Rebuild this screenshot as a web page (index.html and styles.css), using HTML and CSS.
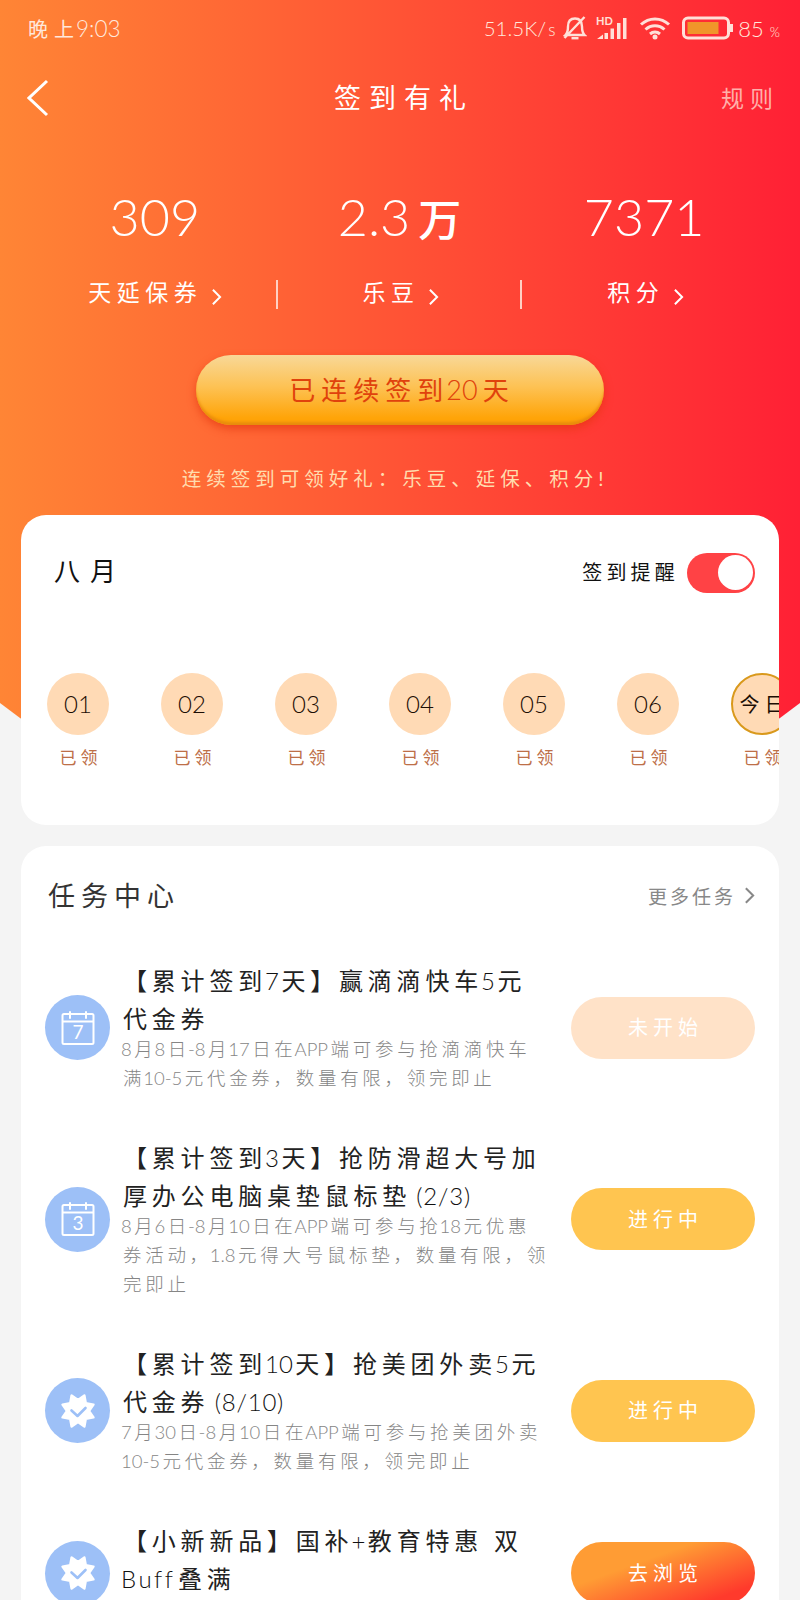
FILE: index.html
```html
<!DOCTYPE html>
<html lang="zh-CN">
<head>
    <meta charset="UTF-8">
    <meta name="viewport" content="width=device-width, initial-scale=1.0">
    <title>签到有礼</title>
    <link rel="stylesheet" href="styles.css">
</head>
<body>
    <svg class="defs" width="0" height="0">
        <symbol id="calendar" viewBox="0 0 34 34">
            <g fill="none" stroke="#fff" stroke-width="2" stroke-linecap="round">
                <rect x="1.5" y="3" width="31" height="30" rx="1.5"/>
                <path d="M2 10.5h30M9 1v6M25 1v6"/>
            </g>
        </symbol>
        <symbol id="badge" viewBox="0 0 36 36">
            <path fill="#fff" stroke="#fff" stroke-width="2.4" stroke-linejoin="round" d="M33.5 24.4 29 18l4.5-6.4-7.7-1.4-1.4-7.7L18 7l-6.4-4.5-1.4 7.7-7.7 1.4L7 18l-4.5 6.4 7.7 1.4 1.4 7.7L18 29l6.4 4.5 1.4-7.7z"/>
            <path fill="none" stroke="#9dc0f7" stroke-width="2.6" stroke-linecap="round" stroke-linejoin="round" d="M11.5 17.5l6 5.5 8-8"/>
        </symbol>
        <symbol id="arrow" viewBox="0 0 12 20">
            <path fill="none" stroke="currentColor" stroke-width="2.2" d="M2 2l8 8-8 8"/>
        </symbol>
    </svg>

    <div class="page">
        <header class="hero">
            <div class="status">
                <div class="time">晚<i></i>上<span class="n">9:03</span></div>
                <div class="status-right">
                    <span class="n speed">51.5K/<small>s</small></span>
                    <svg class="bell" width="24" height="24" viewBox="0 0 24 24" fill="none" stroke="#ffe0d8" stroke-width="2.4">
                        <path d="M2.5 19h19c-2.5-2.5-2.5-5-2.5-8.5C19 5 16 2.5 12 2.5S5 5 5 10.5c0 3.5 0 6-2.5 8.5zM1.5 22L21.5 1"/>
                        <path d="M8.5 22.2h7"/>
                    </svg>
                    <svg class="signal" width="32" height="24" viewBox="0 0 32 24">
                        <text class="hd" x="0" y="9">HD</text>
                        <path fill="#ffe0d8" d="M1 23l6-4.5V23zM8.5 17H12v6H8.5zM14.5 12.5H18V23h-3.5zM21 7h3.5v16H21zM27 2h3.5v21H27z"/>
                    </svg>
                    <svg class="wifi" width="32" height="24" viewBox="0 0 32 24" fill="none" stroke="#ffe0d8" stroke-width="3">
                        <path d="M2 8.5c8-7.5 20-7.5 28 0M6.5 13.5c5.5-5 13.5-5 19 0M11 18c3-2.6 7-2.6 10 0"/>
                        <circle cx="16" cy="21" r="2.5" fill="#ffe0d8" stroke="none"/>
                    </svg>
                    <svg class="battery" width="52" height="24" viewBox="0 0 52 24">
                        <rect x="1.5" y="2" width="45" height="20" rx="4.5" fill="none" stroke="#ffe0d8" stroke-width="3"/>
                        <rect x="5.5" y="6" width="31" height="12" fill="#f0952a"/>
                        <path d="M49.5 8v8" stroke="#ffe0d8" stroke-width="3"/>
                    </svg>
                    <span class="n percent">85 <small>%</small></span>
                </div>
            </div>

            <nav class="nav">
                <svg class="back" width="22" height="38" viewBox="0 0 22 38" fill="none" stroke="#fff" stroke-width="3">
                    <path d="M20 2L2 19l18 17"/>
                </svg>
                <h1>签到有礼</h1>
                <a class="rules">规则</a>
            </nav>

            <div class="stats">
                <div class="stat">
                    <div class="value">309</div>
                    <div class="label"><span>天延保券</span><svg width="11" height="18"><use href="#arrow"/></svg></div>
                </div>
                <div class="stat">
                    <div class="value">2.3<b>万</b></div>
                    <div class="label"><span>乐豆</span><svg width="11" height="18"><use href="#arrow"/></svg></div>
                </div>
                <div class="stat">
                    <div class="value wide">7371</div>
                    <div class="label"><span>积分</span><svg width="11" height="18"><use href="#arrow"/></svg></div>
                </div>
            </div>

            <button class="signed">已连续签到<span class="n">20</span>天</button>
            <p class="tip">连续签到可领好礼：乐豆、延保、积分!</p>
        </header>

        <section class="card calendar">
            <div class="calendar-head">
                <h2>八月</h2>
                <div class="remind"><span>签到提醒</span><span class="toggle"></span></div>
            </div>
            <div class="days">
                <div class="day"><span class="circle">01</span><em>已领</em></div>
                <div class="day"><span class="circle">02</span><em>已领</em></div>
                <div class="day"><span class="circle">03</span><em>已领</em></div>
                <div class="day"><span class="circle">04</span><em>已领</em></div>
                <div class="day"><span class="circle">05</span><em>已领</em></div>
                <div class="day"><span class="circle">06</span><em>已领</em></div>
                <div class="day"><span class="circle today">今日</span><em>已领</em></div>
            </div>
        </section>

        <section class="card tasks">
            <div class="tasks-head">
                <h2>任务中心</h2>
                <a class="more">更多任务<svg width="11" height="19"><use href="#arrow"/></svg></a>
            </div>

            <div class="task">
                <div class="icon"><svg width="34" height="34"><use href="#calendar"/><text x="17" y="28">7</text></svg></div>
                <div class="text">
                    <h3>【累计签到<span class="n">7</span>天】赢滴滴快车<span class="n">5</span>元<br>代金券</h3>
                    <p><span class="n">8</span>月<span class="n">8</span>日<span class="n">-8</span>月<span class="n">17</span>日在<span class="n">APP</span>端可参与抢滴滴快车<br>满<span class="n">10-5</span>元代金券，数量有限，领完即止</p>
                </div>
                <button class="btn disabled">未开始</button>
            </div>

            <div class="task">
                <div class="icon"><svg width="34" height="34"><use href="#calendar"/><text x="17" y="28">3</text></svg></div>
                <div class="text">
                    <h3>【累计签到<span class="n">3</span>天】抢防滑超大号加<br>厚办公电脑桌垫鼠标垫<span class="n count"> (2/3)</span></h3>
                    <p><span class="n">8</span>月<span class="n">6</span>日<span class="n">-8</span>月<span class="n">10</span>日在<span class="n">APP</span>端可参与抢<span class="n">18</span>元优惠<br>券活动，<span class="n">1.8</span>元得大号鼠标垫，数量有限，领<br>完即止</p>
                </div>
                <button class="btn">进行中</button>
            </div>

            <div class="task">
                <div class="icon"><svg width="36" height="36"><use href="#badge"/></svg></div>
                <div class="text">
                    <h3>【累计签到<span class="n">10</span>天】抢美团外卖<span class="n">5</span>元<br>代金券<span class="n count"> (8/10)</span></h3>
                    <p><span class="n">7</span>月<span class="n">30</span>日<span class="n">-8</span>月<span class="n">10</span>日在<span class="n">APP</span>端可参与抢美团外卖<br><span class="n">10-5</span>元代金券，数量有限，领完即止</p>
                </div>
                <button class="btn">进行中</button>
            </div>

            <div class="task">
                <div class="icon"><svg width="36" height="36"><use href="#badge"/></svg></div>
                <div class="text">
                    <h3>【小新新品】国补<span class="n">+</span>教育特惠 双<br><span class="n buff">Buff</span>叠满</h3>
                    <p>&nbsp;</p>
                </div>
                <button class="btn go">去浏览</button>
            </div>
        </section>
    </div>
</body>
</html>
```

FILE: styles.css
```css
* {
    box-sizing: border-box;
    margin: 0;
    padding: 0;
}
body {
    font-family: Lato, "Noto Sans CJK SC", sans-serif;
    font-weight: 400;
    background-color: #f4f4f4;
}
h1, h2, h3, b, em, a {
    font-weight: inherit;
    font-style: normal;
}
button {
    border: none;
    font-family: inherit;
    font-weight: inherit;
}
.defs {
    display: block;
}
.page {
    height: 1600px;
    overflow: hidden;
}
/* latin letters and digits stay tight between the spaced hanzi */
.n {
    letter-spacing: 0;
    font-weight: 300;
    white-space: pre;
}

/* header */
.hero {
    height: 740px;
    color: #fff;
    background: linear-gradient(90deg, #ff8535, #ff5335 50%, #ff2035);
    clip-path: polygon(0 0, 100% 0, 100% 703px, 97.5% 718px, 94% 735px, 6% 735px, 2.5% 718px, 0 703px);
}
.status {
    display: flex;
    justify-content: space-between;
    align-items: center;
    height: 56px;
    padding: 0 20px 0 28px;
    font-size: 21px;
    color: #ffe8dc;
}
.time {
    display: flex;
    align-items: center;
    font-size: 20px;
}
.time i {
    width: 6px;
}
.time .n {
    margin-left: 2px;
    font-size: 22.5px;
}
.status-right {
    display: flex;
    align-items: center;
}
.speed {
    font-size: 20.5px;
}
.speed small {
    font-size: 17px;
    margin-left: 2px;
}
.bell {
    margin-left: 8px;
}
.signal {
    margin-left: 9px;
}
.hd {
    font: bold 11px Lato, sans-serif;
    fill: #ffe0d8;
}
.wifi {
    margin-left: 11px;
}
.battery {
    margin-left: 11px;
}
.percent {
    margin-left: 4px;
    font-size: 22px;
}
.percent small {
    font-size: 13px;
}
.nav {
    display: grid;
    grid-template-columns: 150px 1fr 150px;
    align-items: center;
    height: 84px;
    padding: 0 24px 0 27px;
}
.nav h1 {
    margin: -3px 0 0 5px;
    text-align: center;
    font-size: 27px;
    letter-spacing: 8px;
}
.rules {
    margin: -2px -3px 0 0;
    text-align: right;
    font-size: 23px;
    letter-spacing: 6px;
    color: #ffb0aa;
}
.stats {
    display: grid;
    grid-template-columns: repeat(3, 1fr);
    padding: 38px 35px 0 31px;
}
.stat {
    display: flex;
    flex-direction: column;
    align-items: center;
}
.value {
    height: 78px;
    padding-left: 3px;
    line-height: 76px;
    font-size: 52px;
    font-weight: 300;
    white-space: pre;
}
.value b {
    font-size: 43px;
    font-weight: 500;
    margin-left: 8px;
}
.label {
    display: flex;
    align-items: center;
    justify-content: center;
    width: 100%;
    height: 29px;
    margin-top: 24px;
    padding-left: 4px;
    font-size: 23px;
    letter-spacing: 5.5px;
}
.label span {
    margin-top: -8px;
}
.stat + .stat .label {
    border-left: 2px solid #ffd0c4;
}
.label svg {
    margin: 5px 0 0 9px;
}
.signed {
    display: block;
    width: 408px;
    height: 70px;
    margin: 46px auto 0;
    padding: 0 0 4px 4px;
    border-radius: 35px;
    font-size: 26px;
    letter-spacing: 6px;
    color: #e0420c;
    background: linear-gradient(#f8d898, #fdc254 45%, #ffa408 90%);
    box-shadow: inset 0 -4px 3px -1px #e88b0c, 0 4px 8px rgba(225, 50, 10, 0.6);
}
.signed .n {
    margin: 0 5px 0 -3px;
    font-size: 27px;
}
.tip {
    margin-top: 38px;
    line-height: 32px;
    text-align: center;
    font-size: 19.5px;
    letter-spacing: 5px;
    padding-right: 10px;
    color: #ffdcae;
}

/* cards */
.card {
    width: 758px;
    margin-left: 21px;
    background-color: #fff;
    border-radius: 25px;
}
.calendar {
    position: relative;
    height: 310px;
    margin-top: -225px;
    overflow: hidden;
}
.calendar-head {
    display: flex;
    justify-content: space-between;
    align-items: center;
    height: 116px;
    padding: 0 24px 0 33px;
    color: #111;
}
.calendar-head h2 {
    margin-top: -8px;
    font-size: 26px;
    letter-spacing: 10px;
}
.remind {
    display: flex;
    align-items: center;
    font-size: 20px;
    letter-spacing: 4.2px;
}
.remind span:first-child {
    margin-top: -4px;
}
.toggle {
    width: 68px;
    height: 40px;
    margin-left: 8px;
    padding: 2px;
    border-radius: 20px;
    background-color: #ff4245;
}
.toggle::after {
    content: "";
    display: block;
    width: 35px;
    height: 35px;
    margin-left: auto;
    border-radius: 50%;
    background-color: #fff;
}
.days {
    display: flex;
    gap: 52px;
    width: 900px;
    padding: 42px 0 0 26px;
}
.day {
    display: flex;
    flex-direction: column;
    align-items: center;
    width: 62px;
}
.circle {
    display: flex;
    justify-content: center;
    align-items: center;
    width: 62px;
    height: 62px;
    padding-bottom: 2px;
    border-radius: 50%;
    font-size: 24px;
    font-weight: 300;
    color: #1c0d04;
    background-color: #ffdab5;
}
.today {
    border: 2px solid #d9991c;
    font-size: 20px;
    font-weight: 400;
    letter-spacing: 5px;
    padding-left: 5px;
    white-space: nowrap;
}
.day em {
    margin: 10px 0 0 5px;
    line-height: 26px;
    font-size: 17px;
    letter-spacing: 4px;
    white-space: nowrap;
    color: #bd6f48;
}

/* task list */
.tasks {
    height: 900px;
    margin-top: 21px;
}
.tasks-head {
    display: flex;
    justify-content: space-between;
    align-items: center;
    height: 98px;
    padding: 0 24px 0 27px;
}
.tasks-head h2 {
    margin-top: -2px;
    font-size: 27px;
    letter-spacing: 6px;
    color: #333;
}
.more {
    display: flex;
    align-items: center;
    font-size: 19px;
    letter-spacing: 3px;
    color: #888;
}
.more svg {
    margin-left: 8px;
}
.task {
    display: flex;
    align-items: center;
    padding: 0 24px 0 24px;
    margin-bottom: 46px;
}
.tasks-head + .task {
    margin-top: 18px;
}
.icon {
    display: flex;
    justify-content: center;
    align-items: center;
    flex: none;
    width: 65px;
    height: 65px;
    border-radius: 50%;
    background-color: #9dc0f7;
}
.icon text {
    font-size: 19px;
    text-anchor: middle;
    fill: #fff;
}
.text {
    flex: 1;
    margin-left: 13px;
    white-space: nowrap;
}
.text .n {
    margin: 0 2.5px 0 -2px;
}
.text h3 {
    line-height: 38px;
    font-size: 24px;
    letter-spacing: 4.8px;
    color: #222;
}
.text h3 .n {
    color: #111;
}
.text h3 .count {
    letter-spacing: 0.8px;
}
.text p {
    margin-top: -3px;
    line-height: 29px;
    font-size: 18.5px;
    font-weight: 300;
    letter-spacing: 3.7px;
    color: #858585;
}
.text .buff {
    letter-spacing: 2.5px;
}
.btn {
    flex: none;
    width: 184px;
    height: 62px;
    border-radius: 31px;
    padding: 0 0 2px 5px;
    font-size: 20px;
    letter-spacing: 5px;
    color: #fff;
    background-color: #ffc550;
}
.btn.disabled {
    background-color: #ffe2c8;
}
.btn.go {
    background: linear-gradient(160deg, #ff9c34 35%, #ff3a2c 85%);
}
```
